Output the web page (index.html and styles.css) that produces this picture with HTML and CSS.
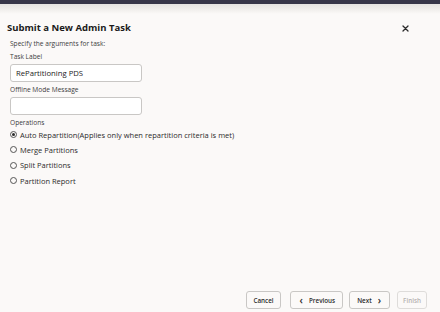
FILE: index.html
```html
<!DOCTYPE html>
<html lang="en">
<head>
  <meta charset="UTF-8">
  <title>Submit a New Admin Task</title>
  <link rel="stylesheet" href="styles.css">
</head>
<body>
  <div class="topbar"></div>
  <div class="haze"></div>

  <div class="dialog">
    <div class="dialog-header">
      <h2>Submit a New Admin Task</h2>
      <button type="button" class="close-btn" aria-label="Close">
        <svg width="7" height="7" viewBox="0 0 7 7">
          <path d="M1 1 L6 6 M6 1 L1 6" stroke="#2b2b2b" stroke-width="1.3" stroke-linecap="round"/>
        </svg>
      </button>
    </div>

    <form class="dialog-body">
      <p class="hint">Specify the arguments for task:</p>

      <label class="field-label">Task Label</label>
      <input type="text" class="text-input" value="RePartitioning PDS">

      <label class="field-label">Offline Mode Message</label>
      <input type="text" class="text-input">

      <label class="field-label ops">Operations</label>
      <div class="radio-list">
        <label class="radio-row"><span class="radio checked"></span>Auto Repartition(Applies only when repartition criteria is met)</label>
        <label class="radio-row"><span class="radio"></span>Merge Partitions</label>
        <label class="radio-row"><span class="radio"></span>Split Partitions</label>
        <label class="radio-row"><span class="radio"></span>Partition Report</label>
      </div>
    </form>

    <div class="dialog-footer">
      <button type="button" class="btn cancel">Cancel</button>
      <button type="button" class="btn prev"><span class="chev">&#x2039;</span>Previous</button>
      <button type="button" class="btn next">Next<span class="chev">&#x203A;</span></button>
      <button type="button" class="btn disabled">Finish</button>
    </div>
  </div>
</body>
</html>
```

FILE: styles.css
```css
* {
  margin: 0;
  padding: 0;
  box-sizing: border-box;
  font-family: 'Open Sans', sans-serif;
}

body, html {
  height: 100%;
  background-color: #fbf9f8;
  color: #2b2b2b;
  overflow: hidden;
}

body {
  display: flex;
  flex-direction: column;
}

.topbar {
  height: 4px;
  background-color: #363548;
}

.haze {
  height: 10px;
  background: linear-gradient(#e4e2e0, #f1efed 60%, #fbf9f8);
}

.dialog {
  flex: 1;
  display: flex;
  flex-direction: column;
}

.dialog-header {
  display: flex;
  justify-content: space-between;
  align-items: center;
  padding: 7px 31px 0 7px;
}

.dialog-header h2 {
  font-size: 9.5px;
  line-height: 14px;
  font-weight: 700;
  color: #1a1a1a;
}

.close-btn {
  border: none;
  background: none;
  display: flex;
  cursor: pointer;
}

.dialog-body {
  flex: 1;
  padding: 4px 10px 0;
}

.hint, .field-label {
  display: block;
  font-size: 6.6px;
  line-height: 10px;
  color: #3c3c3c;
}

.hint {
  margin-bottom: 3px;
}

.field-label {
  margin-bottom: 2px;
}

.field-label.ops {
  margin-top: 1px;
}

.text-input {
  display: block;
  width: 132px;
  height: 18px;
  border: 1px solid #c9c7c5;
  border-radius: 3px;
  background: #fff;
  padding: 0 5px;
  font-size: 7.7px;
  color: #222;
  margin-bottom: 3px;
}

.radio-list {
  display: flex;
  flex-direction: column;
  margin-top: -3px;
}

.radio-row {
  display: flex;
  align-items: center;
  gap: 3px;
  height: 15.3px;
  font-size: 7.5px;
  color: #2b2b2b;
}

.radio {
  width: 7px;
  height: 7px;
  border: 1px solid #555;
  border-radius: 50%;
  display: flex;
  align-items: center;
  justify-content: center;
}

.radio.checked::after {
  content: "";
  width: 3px;
  height: 3px;
  border-radius: 50%;
  background: #2b2b2b;
}

.dialog-footer {
  display: flex;
  justify-content: flex-end;
  gap: 6px;
  padding: 0 13px 3px 0;
}

.btn {
  height: 18px;
  padding: 0 5px;
  border: 1px solid #c9c7c5;
  border-radius: 3px;
  background: #fbf9f8;
  font-size: 6.3px;
  font-weight: 600;
  color: #2b2b2b;
  display: flex;
  align-items: center;
  gap: 6px;
  cursor: pointer;
}

.btn.cancel {
  padding: 0 6px;
  margin-right: 3px;
}

.btn.prev {
  padding: 0 7px 0 9px;
}

.btn.next {
  padding: 0 8px 0 7px;
  margin-right: 1px;
}

.btn.disabled {
  color: #b5b3b1;
  border-color: #dedcda;
  cursor: default;
}

.chev {
  font-size: 10px;
  line-height: 1;
}
```
